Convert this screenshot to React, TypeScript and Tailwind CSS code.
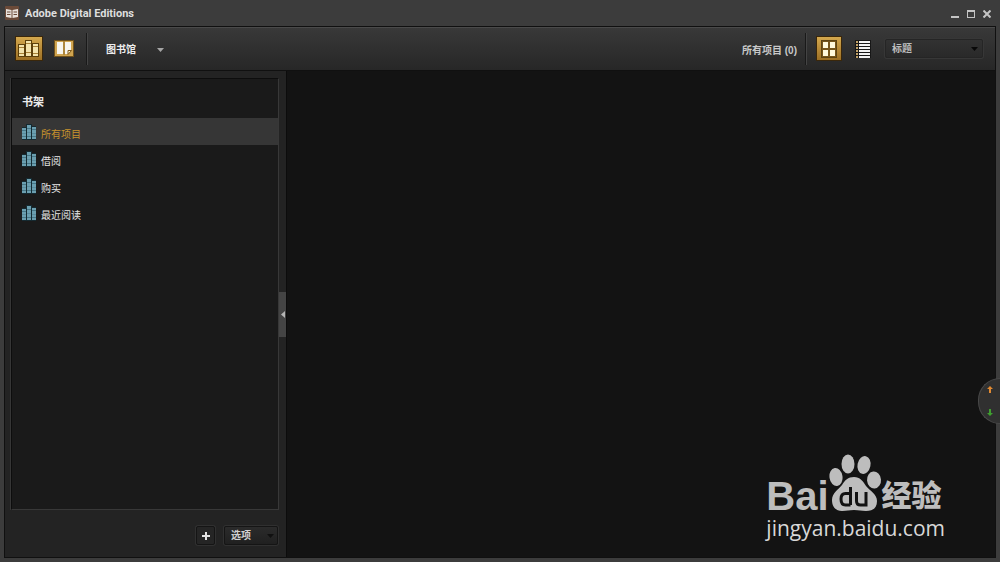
import React, { useState } from 'react';

const shelves = ['所有项目', '借阅', '购买', '最近阅读'];

const AppIcon = () => (
    <svg width="14" height="14" viewBox="0 0 14 14" aria-hidden="true">
        <rect width="14" height="14" rx="1" fill="#6b4a38" />
        <path d="M1 3l5.5 1v8L1 11zM13 3L7.5 4v8l5.5-1z" fill="#e9e1da" />
        <path d="M2 6h3.5M2 8.5h3.5M8.5 6H12M8.5 8.5H12" stroke="#6b4a38" strokeWidth="1" />
    </svg>
);

const LibraryIcon = () => (
    <svg width="22" height="18" viewBox="0 0 22 18" aria-hidden="true">
        <g fill="#f3e3ac" stroke="#5b3f0b">
            <rect x="0.5" y="4.5" width="6" height="12" />
            <rect x="7.5" y="0.5" width="6" height="16" />
            <rect x="14.5" y="3.5" width="6" height="13" />
        </g>
        <path d="M1 7.5h5M1 13.5h5M8 3.5h5M8 12.5h5M15 6.5h5M15 13.5h5" stroke="#a88238" />
    </svg>
);

const BookIcon = () => (
    <svg width="20" height="17" viewBox="0 0 20 17" aria-hidden="true">
        <rect x="0.5" y="0.5" width="19" height="16" fill="#d0a550" stroke="#71521c" />
        <rect x="3" y="2" width="6" height="12" fill="#f7f5ee" />
        <path d="M11 2h6v8.500L13.500 14H11z" fill="#f7f5ee" />
        <path d="M10 1v14" stroke="#8c6a2c" />
        <path d="M14 14.500v-4h3.500z" fill="#fff5ca" stroke="#80591b" />
    </svg>
);

const GridIcon = () => (
    <svg width="16" height="18" viewBox="0 0 16 18" aria-hidden="true">
        <rect x="0.5" y="0.5" width="15" height="17" fill="#75551b" stroke="#5d4312" />
        <path d="M2 2h5v6H2zM9 2h5v6H9zM2 10h5v6H2zM9 10h5v6H9z" fill="#fff9dc" />
    </svg>
);

const ListIcon = () => (
    <svg width="16" height="18" viewBox="0 0 16 18" aria-hidden="true">
        <rect width="16" height="18" fill="#171717" />
        <path d="M1 2h2M1 5h2M1 8h2M1 11h2M1 14h2M1 17h2" stroke="#c3a267" strokeWidth="2" />
        <path d="M4 2h11M4 5h11M4 8h11M4 11h11M4 14h11M4 17h11" stroke="#f2f2f2" strokeWidth="2" />
    </svg>
);

const ShelfIcon = () => (
    <svg width="14" height="16" viewBox="0 0 14 16" aria-hidden="true">
        <path d="M0 3h4V0h6v2h4v14H0z" fill="#152a31" />
        <path d="M0 4h4v11H0zM5 1h4v14H5zM10 3h4v12h-4z" fill="#6b9fb0" />
        <path d="M0 6.5h4M0 12.5h4M5 4.500h4M5 12.500h4M10 5.500h4M10 12.500h4" stroke="#457686" />
        <path d="M0 9.500h4M5 8.500h4M10 9.500h4" stroke="#588b9c" />
    </svg>
);

const DownArrow = ({ className }: { className?: string }) => (
    <svg width="7" height="4" viewBox="0 0 7 4" className={className} aria-hidden="true">
        <path d="M0 0h7L3.5 4z" fill="currentColor" />
    </svg>
);

const Paw = () => (
    <svg width="53" height="58" viewBox="0 0 53 58" aria-hidden="true">
        <g fill="#bdbdbd">
            <ellipse cx="7" cy="23" rx="6.500" ry="9" transform="rotate(-8 7 23)" />
            <ellipse cx="19" cy="10" rx="6.500" ry="9.500" />
            <ellipse cx="35" cy="11" rx="6.500" ry="9" transform="rotate(12 35 11)" />
            <ellipse cx="45" cy="26" rx="7" ry="8.500" transform="rotate(-5 45 26)" />
            <path d="M25 23c6 0 9 4 12 9 4 5 11 8 11 15 0 7-4 10-11 10-5 0-7-1-12-1s-7 1-12 1C7 57 3 53 3 46c0-7 6-10 10-15 3-5 6-8 12-8z" />
        </g>
        <g fill="none" stroke="#121212" strokeWidth="3">
            <path d="M21.500 33v18M21.500 39.500h-5c-3 0-4.500 2-4.500 5.500s1.500 6 4.500 6h5" />
            <path d="M27.500 38v9c0 3 1.500 4 4 4h5.500V38" />
        </g>
    </svg>
);

const Divider = () => <div className="h-8 w-px bg-[#191919] shadow-[1px_0_0_#444]" />;

const Header = () => (
    <header className="flex h-[26px] shrink-0 items-center justify-between pl-[5px] pr-[9px]">
        <div className="flex items-center gap-[6px]">
            <AppIcon />
            <h1 className="pt-px font-[Roboto,'Liberation_Sans',sans-serif] text-[11px] font-bold leading-4 text-[#dedede]">Adobe Digital Editions</h1>
        </div>
        <div className="flex items-center gap-2 pt-px text-[#c4c4c4]">
            <button aria-label="Minimize" className="flex h-2 w-2 items-end">
                <span className="h-[2px] w-full bg-current" />
            </button>
            <button aria-label="Maximize" className="h-2 w-2 border border-t-2 border-current" />
            <button aria-label="Close">
                <svg width="8" height="8" viewBox="0 0 8 8">
                    <path d="M0.500 0.500l7 7M7.500 0.500l-7 7" stroke="currentColor" strokeWidth="2" />
                </svg>
            </button>
        </div>
    </header>
);

const Toolbar = () => (
    <div className="flex h-11 shrink-0 items-center justify-between border-b border-[#101010] bg-linear-to-b from-[#393939] to-[#272727] pl-[10px] pr-3 shadow-[inset_0_1px_0_#4a4a4a]">
        <div className="flex items-center">
            <button aria-label="图书馆视图" className="flex h-[25px] w-7 items-center justify-center border border-[#3a270b] bg-linear-to-b from-[#d4a84e] to-[#9d7024]">
                <LibraryIcon />
            </button>
            <button aria-label="阅读视图" className="ml-[11px] mr-3">
                <BookIcon />
            </button>
            <Divider />
            <button className="ml-[19px] flex items-center gap-[21px] pt-[2px] text-[10px] font-bold leading-4 text-[#ededed]">
                图书馆
                <DownArrow className="text-[#a6a6a6]" />
            </button>
        </div>
        <div className="flex items-center">
            <span className="mr-2 pt-1 text-[10px] font-bold leading-4 text-[#c9c9c9]">所有项目 (0)</span>
            <Divider />
            <button aria-label="缩略图" className="ml-[10px] flex h-[25px] w-[26px] items-center justify-center border border-[#3a270b] bg-linear-to-b from-[#d4a84e] to-[#9d7024]">
                <GridIcon />
            </button>
            <button aria-label="列表" className="ml-[13px] mr-[14px]">
                <ListIcon />
            </button>
            <div className="relative">
                <select aria-label="排序" className="block h-[19px] w-[98px] appearance-none rounded-xs border border-[#252525] bg-linear-to-b from-[#323232] to-[#292929] pl-[6px] text-[10px] font-bold text-[#bdbdbd] shadow-[0_0_0_1px_#373737]">
                    <option>标题</option>
                </select>
                <DownArrow className="pointer-events-none absolute right-[5px] top-2 text-[#080808]" />
            </div>
        </div>
    </div>
);

const Sidebar = () => {
    const [selected, setSelected] = useState(0);

    return (
        <aside className="flex w-[281px] shrink-0 flex-col bg-[#232323] pl-[6px] pt-[7px]">
            <div className="flex min-h-0 flex-1">
                <nav className="min-w-0 flex-1 border border-t-[#0d0d0d] border-l-[#0d0d0d] border-r-[#383838] border-b-[#383838] bg-[#1a1a1a] shadow-[-1px_0_0_#363636]">
                    <h2 className="flex h-[39px] items-center pl-[10px] pt-[6px] text-[11px] font-bold leading-4 text-[#ececec]">书架</h2>
                    <ul>
                        {shelves.map((name, i) => (
                            <li key={name}>
                                <button
                                    onClick={() => setSelected(i)}
                                    className={`flex h-[27px] w-full items-center gap-[5px] pl-[10px] text-[10px] leading-4 ${
                                        i === selected ? 'bg-[#363636] text-[#c8932d]' : 'text-[#e6e6e6]'
                                    }`}
                                >
                                    <ShelfIcon />
                                    <span className="pt-[6px]">{name}</span>
                                </button>
                            </li>
                        ))}
                    </ul>
                </nav>
                <button aria-label="折叠侧栏" className="mt-10 flex h-[45px] w-[7px] items-center justify-center self-center bg-[#444]">
                    <svg width="4" height="7" viewBox="0 0 4 7">
                        <path d="M4 0v7L0 3.500z" fill="#b5b5b5" />
                    </svg>
                </button>
            </div>
            <div className="flex h-[47px] shrink-0 items-center justify-end gap-[9px] pr-2 pt-1">
                <button aria-label="新建书架" className="flex h-[19px] w-[19px] items-center justify-center rounded-xs border border-[#151515] bg-[#252525] shadow-[0_0_0_1px_#303030]">
                    <svg width="8" height="8" viewBox="0 0 8 8">
                        <path d="M4 0v8M0 4h8" stroke="#e2e2e2" strokeWidth="2" />
                    </svg>
                </button>
                <div className="relative">
                    <select aria-label="选项" className="block h-[19px] w-[54px] appearance-none rounded-xs border border-[#151515] bg-linear-to-b from-[#2b2b2b] to-[#202020] pl-[6px] text-[10px] font-bold text-[#d2d2d2] shadow-[0_0_0_1px_#303030]">
                        <option>选项</option>
                    </select>
                    <DownArrow className="pointer-events-none absolute right-1 top-2 text-[#101010]" />
                </div>
            </div>
        </aside>
    );
};

const Watermark = () => (
    <div className="absolute bottom-[13px] right-[50px] text-[#bdbdbd]">
        <div className="flex items-end">
            <span className="text-[40px] font-bold leading-8">Bai</span>
            <Paw />
            <span className="text-[30px] font-black leading-8">经验</span>
        </div>
        <p className="font-['Open_Sans','Noto_Sans',sans-serif] text-[21px] leading-8 text-[#d8d8d8]">jingyan.baidu.com</p>
    </div>
);

const ScrollBubble = () => (
    <div className="absolute right-0 top-[378px] flex h-[46px] w-[22px] flex-col items-center justify-between rounded-l-full border border-r-0 border-[#484848] bg-[#303030] py-[7px]">
        <svg width="6" height="7" viewBox="0 0 6 7">
            <path d="M3 0l3 3H4v4H2V3H0z" fill="#e18a32" />
        </svg>
        <svg width="6" height="7" viewBox="0 0 6 7">
            <path d="M3 7l3-3H4V0H2v4H0z" fill="#3f9f2f" />
        </svg>
    </div>
);

const App: React.FC = () => {
    return (
        <div className="relative flex h-screen flex-col bg-[#3c3c3c] font-['Liberation_Sans','Noto_Sans_CJK_SC',sans-serif]">
            <Header />
            <div className="mx-1 mb-1 flex min-h-0 flex-1 flex-col border border-[#101010]">
                <Toolbar />
                <div className="flex min-h-0 flex-1">
                    <Sidebar />
                    <main className="relative min-w-0 flex-1 border-l border-[#0c0c0c] bg-[#131313]">
                        <Watermark />
                    </main>
                </div>
            </div>
            <ScrollBubble />
        </div>
    );
};

export default App;
